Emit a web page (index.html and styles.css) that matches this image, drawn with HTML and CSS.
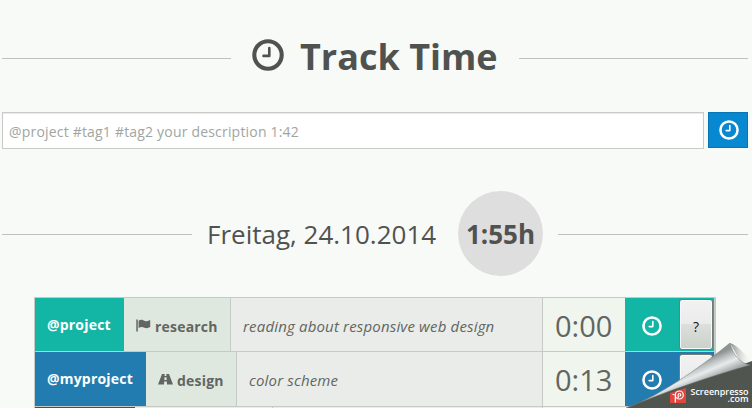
FILE: index.html
```html
<!DOCTYPE html>
<html lang="de">
<head>
<meta charset="utf-8">
<title>Track Time</title>
<link rel="stylesheet" href="styles.css">
</head>
<body>
<svg class="defs" width="0" height="0">
  <symbol id="clock" viewBox="0 0 32 32"><circle cx="16" cy="16" r="13.700" fill="none" stroke="currentColor" stroke-width="4.100"/><path d="M17.300 9v7.900H11.500" fill="none" stroke="currentColor" stroke-width="2.600" stroke-linejoin="round" stroke-linecap="round"/></symbol>
</svg>
<header class="divider title">
  <h1><svg class="clock-large"><use href="#clock"/></svg><span>Track Time</span></h1>
</header>
<form class="entry">
  <input type="text" placeholder="@project #tag1 #tag2 your description 1:42">
  <button type="button" class="submit"><svg class="clock"><use href="#clock"/></svg></button>
</form>
<div class="divider day">
  <h2>Freitag, 24.10.2014</h2><strong class="total">1:55h</strong>
</div>
<main class="entries">
  <div class="row green">
    <div class="project">@project</div>
    <div class="tag"><svg class="tag-icon" viewBox="0 0 15 13"><path d="M.3.5h1.500v12H.3z"/><path d="M2.600 1.800C5-.1 7 1.100 8.800 1.900c1.900.8 3.600.2 5.400-.8v7c-2 1.100-3.700 1.500-5.600.7C6.800 8 5 7.400 2.600 9z"/></svg>research</div>
    <div class="description">reading about responsive web design</div>
    <div class="time">0:00</div>
    <div class="actions"><span class="resume"><svg class="clock"><use href="#clock"/></svg></span><button class="help">?</button></div>
  </div>
  <div class="row blue">
    <div class="project">@myproject</div>
    <div class="tag"><svg class="tag-icon" viewBox="0 0 15 13"><path fill-rule="evenodd" d="M4 1h2.700l-.2 2h2l-.2-2H11l4 10.500H9l-.2-3H6.200l-.2 3H0zM6.500 4.200L6.300 7h2.400l-.2-2.800z"/></svg>design</div>
    <div class="description">color scheme</div>
    <div class="time">0:13</div>
    <div class="actions"><span class="resume"><svg class="clock"><use href="#clock"/></svg></span><button class="help"></button></div>
  </div>
  <div class="row dark"><div class="project"></div><div class="tag"></div><div class="description"></div><div class="time"></div><div class="actions"></div></div>
</main>
<svg class="peel" viewBox="0 0 132 72">
  <defs>
    <linearGradient id="fold" gradientUnits="userSpaceOnUse" x1="76" y1="27" x2="87" y2="53">
      <stop offset="0" stop-color="#8e9393"/><stop offset=".22" stop-color="#c0c5c5"/><stop offset=".42" stop-color="#e8ebeb"/><stop offset=".68" stop-color="#aeb3b3"/><stop offset="1" stop-color="#747a79"/>
    </linearGradient>
    <linearGradient id="shade" x1="0" y1="0" x2="1" y2="0"><stop offset="0" stop-color="#858a87"/><stop offset="1" stop-color="#f7f9f7" stop-opacity="0"/></linearGradient>
  </defs>
  <path d="M110 7C119 10 123 17 132 25V29L120 25Z" fill="url(#shade)"/>
  <path d="M6 72C42 55 89 41 132 25V72Z" fill="#505550"/>
  <path d="M6 72C43 59 88 25 110 7C113 19 120 27 130 29C91 40 47 55 6 72Z" fill="url(#fold)" stroke="#747977" stroke-width=".5"/>
  <path d="M50 57L66 52V67H50Z" fill="#e3443b"/>
  <circle cx="59.300" cy="59" r="4" fill="none" stroke="#fff" stroke-width="1.200"/>
  <path d="M55.300 66.500V59M58.200 62v-3.200a1.300 1.300 0 1 1 1.300 1.300M52.500 58.500h2" fill="none" stroke="#fff" stroke-width="1.200"/>
  <text x="70.500" y="59" textLength="58" lengthAdjust="spacingAndGlyphs">Screenpresso</text>
  <text x="107.500" y="66" textLength="21" lengthAdjust="spacingAndGlyphs">.com</text>
</svg>
</body>
</html>
```
FILE: styles.css
```css
* { box-sizing: border-box; }
body {
  margin: 0;
  padding: 0 4px 0 2px;
  height: 408px;
  overflow: hidden;
  position: relative;
  background: #f8faf7;
  color: #505250;
  font-family: "Open Sans", sans-serif;
  font-size: 14px;
}
.defs { position: absolute; }
h1, h2 { margin: 0; }
.divider { display: flex; align-items: center; }
.divider::before, .divider::after { content: ""; height: 1px; background: #bfc1be; }
.divider::after { flex: 1; }
.title { height: 112px; padding-top: 5px; }
.title::before { width: 229px; }
h1 {
  display: flex;
  align-items: center;
  width: 288px;
  padding-left: 21px;
  font-size: 36px;
  line-height: 48px;
  white-space: nowrap;
}
h1 span { position: relative; top: -2px; }
.clock-large { width: 32px; height: 32px; margin: -8px 16px 0 0; }
.clock { display: block; width: 20px; height: 20px; }
.entry { display: flex; gap: 4px; }
input {
  width: 702px;
  height: 37px;
  padding: 2px 6px 0;
  border: 1px solid #c8cbc8;
  border-radius: 0;
  background: #fefffe;
  box-shadow: inset 0 1px 1px #e7eae7;
  font: 14px "Open Sans", sans-serif;
  letter-spacing: .19px;
}
input::placeholder { color: #a1a5a1; opacity: 1; }
.submit {
  display: grid;
  place-items: center;
  width: 40px;
  height: 36px;
  padding: 0 0 1px 1px;
  border: 1px solid #0876b4;
  background: #0788d0;
  color: #fff;
}
.day { height: 85px; margin-top: 42px; }
.day::before { width: 190px; }
.day::before, .day::after { margin-top: 1px; }
h2 {
  width: 266px;
  padding-left: 15px;
  font-size: 26px;
  line-height: 36px;
  font-weight: 400;
  white-space: nowrap;
}
.total {
  display: grid;
  place-items: center;
  width: 85px;
  height: 85px;
  margin-right: 15px;
  border-radius: 50%;
  background: #dedede;
  font-size: 26px;
}
.entries {
  width: 682px;
  height: 111px;
  overflow: hidden;
  margin: 21px 0 0 32px;
  border: solid #c6cac7;
  border-width: 1px 2px 0 1px;
}
.row { display: flex; height: 54px; border-bottom: 1px solid #c6cac7; color: #626562; }
.row > div { display: flex; align-items: center; white-space: nowrap; }
.blue { height: 55px; }
.project { width: 89px; padding: 0 0 1px 12px; color: #fff; font-weight: 700; letter-spacing: .2px; }
.green .project, .green .actions { background: #13b5a5; }
.blue .project, .blue .actions { background: #237caf; }
.blue .project { width: 111px; }
.tag { width: 107px; padding: 4px 0 0 12px; background: #dfe8df; border-right: 1px solid #c6cac7; font-weight: 700; letter-spacing: .2px; }
.blue .tag { width: 91px; padding-top: 2px; }
.tag-icon { width: 15px; height: 13px; margin: -2px 4px 0 0; fill: #626562; }
.description { flex: 1; padding: 2px 0 0 12px; background: #eaece9; font-size: 15px; font-style: italic; letter-spacing: .17px; }
.time { width: 83px; padding: 2px 0 0 12px; background: #f0f6ee; border-left: 1px solid #c6cac7; font-size: 29px; }
.blue .time { padding-top: 1px; }
.actions { width: 89px; color: #fff; }
.resume { width: 54px; padding: 2px 0 0 17px; }
.help {
  width: 34px;
  height: 51px;
  padding: 4px 0 0;
  border: 1px solid #717b78;
  border-radius: 3px;
  background: linear-gradient(#f2f2f2, #eaebea 48%, #dcdfdc 50%, #cbd1cb);
  box-shadow: inset 0 0 0 1px #fafafa;
  color: #111;
  font: 14px "Open Sans", sans-serif;
}
.dark { height: 1px; border: 0; }
.dark > div { padding: 0; }
.dark .project { width: 100px; background: #4d4d4d; }
.dark .tag { width: 138px; background: #eaece9; }
.peel { position: absolute; left: 620px; top: 336px; width: 132px; height: 72px; }
.peel text { fill: #fff; font: 600 9.5px/1 "Open Sans", sans-serif; }
```
